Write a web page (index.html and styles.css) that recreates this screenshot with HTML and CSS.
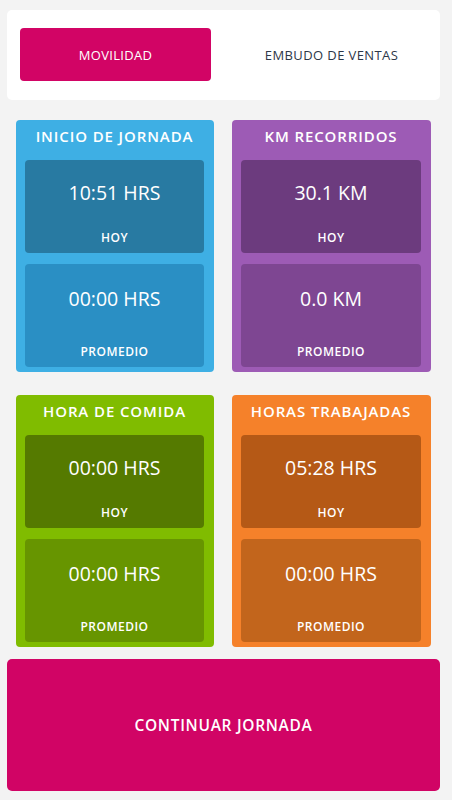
FILE: index.html
```html
<!DOCTYPE html>
<html lang="es">
<head>
<meta charset="utf-8">
<title>Movilidad</title>
<link rel="stylesheet" href="styles.css">
</head>
<body>
<div class="page">
  <div class="tabs">
    <div class="tab tab-active">MOVILIDAD</div>
    <div class="tab">EMBUDO DE VENTAS</div>
  </div>

  <div class="grid">
    <div class="card card-blue">
      <div class="card-title">INICIO DE JORNADA</div>
      <div class="stat stat-today"><div class="value">10:51 HRS</div><div class="label">HOY</div></div>
      <div class="stat stat-avg"><div class="value">00:00 HRS</div><div class="label">PROMEDIO</div></div>
    </div>
    <div class="card card-purple">
      <div class="card-title">KM RECORRIDOS</div>
      <div class="stat stat-today"><div class="value">30.1 KM</div><div class="label">HOY</div></div>
      <div class="stat stat-avg"><div class="value">0.0 KM</div><div class="label">PROMEDIO</div></div>
    </div>
    <div class="card card-green">
      <div class="card-title">HORA DE COMIDA</div>
      <div class="stat stat-today"><div class="value">00:00 HRS</div><div class="label">HOY</div></div>
      <div class="stat stat-avg"><div class="value">00:00 HRS</div><div class="label">PROMEDIO</div></div>
    </div>
    <div class="card card-orange">
      <div class="card-title">HORAS TRABAJADAS</div>
      <div class="stat stat-today"><div class="value">05:28 HRS</div><div class="label">HOY</div></div>
      <div class="stat stat-avg"><div class="value">00:00 HRS</div><div class="label">PROMEDIO</div></div>
    </div>
  </div>

  <div class="cta">CONTINUAR JORNADA</div>
</div>
</body>
</html>
```

FILE: styles.css
```css
* { box-sizing: border-box; }
html, body { margin: 0; padding: 0; }
body {
  background: #f3f3f3;
  font-family: "Open Sans", "Noto Sans", sans-serif;
  width: 452px;
  height: 800px;
  overflow: hidden;
}
.page {
  padding: 10px 12px 9px 7px;
  display: flex;
  flex-direction: column;
}
.tabs {
  background: #ffffff;
  border-radius: 5px;
  height: 90px;
  padding: 18px 13px 19px 13px;
  display: grid;
  grid-template-columns: 1fr 1fr;
  gap: 25px;
}
.tab {
  display: flex;
  align-items: center;
  justify-content: center;
  font-size: 13px;
  color: #2d3748;
  letter-spacing: 0.4px;
}
.tab-active {
  background: #d20465;
  color: #ffffff;
  border-radius: 4px;
  letter-spacing: 0.3px;
}
.grid {
  margin: 20px 9px 0 9px;
  display: grid;
  grid-template-columns: 198px 199px;
  column-gap: 18px;
  row-gap: 23px;
}
.card {
  border-radius: 4px;
  height: 252px;
  padding: 0 10px 5px 9px;
  display: flex;
  flex-direction: column;
}
.card-title {
  height: 40px;
  display: flex;
  align-items: center;
  justify-content: center;
  color: #ffffff;
  font-weight: 600;
  font-size: 15px;
  letter-spacing: 0.9px;
  padding-bottom: 8px;
}
.stat {
  border-radius: 4px;
  display: flex;
  flex-direction: column;
  align-items: center;
  color: #ffffff;
  padding: 20px 0 6px 0;
}
.stat-today { height: 93px; }
.stat-avg { height: 103px; margin-top: 11px; padding-top: 22px; }
.value {
  font-size: 19.5px;
  line-height: 26px;
}
.label {
  margin-top: auto;
  font-size: 12px;
  font-weight: 600;
  letter-spacing: 0.5px;
  line-height: 18px;
}
.card-blue { background: #3eafe4; }
.card-blue .stat-today { background: #287aa2; }
.card-blue .stat-avg { background: #2a8fc4; }
.card-purple { background: #9d5bb5; }
.card-purple .stat-today { background: #6c3b7e; }
.card-purple .stat-avg { background: #7e4692; }
.card-green { background: #80bc00; }
.card-green .stat-today { background: #557a00; }
.card-green .stat-avg { background: #679500; }
.card-orange { background: #f5812a; }
.card-orange .stat-today { background: #b55916; }
.card-orange .stat-avg { background: #c2651c; }
.cta {
  margin-top: 12px;
  height: 132px;
  background: #d10465;
  border-radius: 5px;
  color: #ffffff;
  font-weight: 600;
  font-size: 15.5px;
  display: flex;
  align-items: center;
  justify-content: center;
  letter-spacing: 0.7px;
}
```
